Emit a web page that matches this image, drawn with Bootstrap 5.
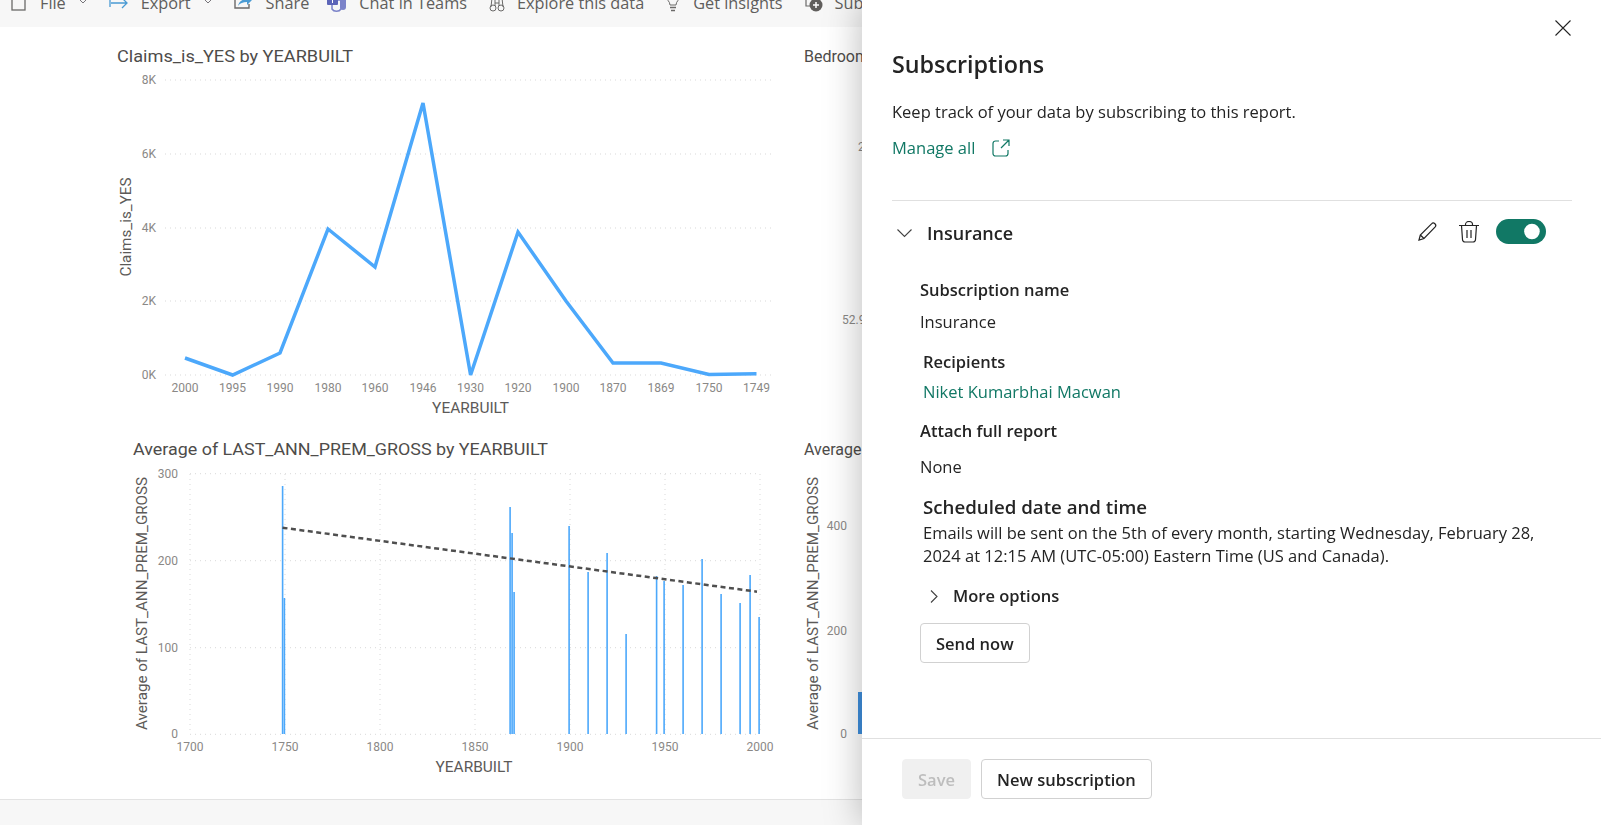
<!DOCTYPE html>
<html lang="en">
  <head>
    <meta charset="UTF-8" />
    <meta name="viewport" content="width=device-width, initial-scale=1.0" />
    <title>Subscriptions</title>
    <link href="https://cdn.jsdelivr.net/npm/bootstrap@5.3.3/dist/css/bootstrap.min.css" rel="stylesheet" />
    <style>
      body {
        height: 825px;
        overflow: hidden;
        background: #fff;
        font-family: "Open Sans", sans-serif;
        font-size: 16.5px;
        color: #242424;
      }

      /* report side */
      .report-toolbar {
        height: 27px;
        flex: 0 0 27px;
        background: #f7f7f7;
        padding-left: 11px;
        gap: 21px;
        color: #605e5c;
        font-size: 16.3px;
        line-height: 20px;
        white-space: nowrap;
      }
      .toolbar-item {
        gap: 12px;
        padding-bottom: 14px;
        align-items: flex-end;
      }
      .toolbar-item svg {
        margin-bottom: -1px;
        flex: none;
      }
      .toolbar-item svg.tb-chev {
        margin-bottom: 7px;
      }
      .toolbar-item svg.tb-wide {
        margin-right: 2px;
      }
      .tb-share {
        margin-right: -3px;
      }
      .tb-chat {
        margin-right: 1px;
      }
      .report-canvas {
        flex: 1 1 auto;
        display: grid;
        grid-template-rows: 393px 379px;
      }
      .report-canvas svg {
        display: block;
      }
      .report-foot {
        height: 26px;
        flex: 0 0 26px;
        background: #f7f7f7;
        border-top: 1px solid #e3e3e3;
      }
      .chart-title {
        font: 400 16px "Roboto", sans-serif;
        fill: #4e4c4a;
      }
      .axis-title {
        font: 400 14px "Roboto", sans-serif;
        fill: #5c5a58;
      }
      .tick-label {
        font: 400 12px "Roboto", sans-serif;
        fill: #8a8886;
      }
      .grid-line {
        stroke: #d9d9d9;
        stroke-width: 1;
        stroke-dasharray: 1 4;
      }

      /* subscriptions pane */
      .subs-pane {
        position: fixed;
        top: 0;
        right: 0;
        bottom: 0;
        width: 739px;
        background: #fff;
        box-shadow: 0 0 36px rgba(0, 0, 0, 0.28);
        display: flex;
        flex-direction: column;
        line-height: 22px;
      }
      .subs-body {
        flex: 1 1 auto;
        padding: 20px 29px 0 30px;
      }
      .close-x {
        height: 15px;
        margin-right: 1px;
      }
      .close-x button,
      .icon-btn {
        background: none;
        border: 0;
        padding: 0;
        line-height: 0;
      }
      .subs-title {
        font-size: 23.3px;
        font-weight: 600;
        line-height: 32px;
        margin: 13px 0 0;
      }
      .subs-lead {
        margin: 21px 0 0;
      }
      .manage-link {
        margin-top: 14px;
        gap: 17px;
      }
      .teal-link {
        color: #117865;
        text-decoration: none;
      }
      .subs-rule {
        margin: 41px 0 0;
        border: 0;
        border-top: 1px solid #e0e0e0;
        opacity: 1;
      }
      .sub-head {
        height: 25px;
        margin-top: 18px;
        padding: 0 26px 0 5px;
      }
      .sub-chev {
        margin-top: 3px;
      }
      .sub-name {
        font-size: 18px;
        font-weight: 600;
        margin: 3px 0 0 15px;
      }
      .edit-btn {
        margin-right: 22px;
      }
      .switch-box {
        margin: 0 0 0 17px;
        padding: 0;
        min-height: 0;
        line-height: 0;
      }
      .switch-box .form-check-input {
        width: 50px;
        height: 25px;
        margin: 0;
        background-color: #117865;
        border: 0;
        background-image: url("data:image/svg+xml,%3csvg xmlns='http://www.w3.org/2000/svg' viewBox='-4 -4 8 8'%3e%3ccircle cx='-.5' r='2.5' fill='%23fff'/%3e%3c/svg%3e");
      }
      .sub-detail {
        padding-left: 28px;
      }
      .field-label {
        font-weight: 600;
      }
      .name-label {
        margin-top: 35px;
      }
      .name-value {
        margin-top: 10px;
      }
      .next-label {
        margin-top: 18px;
      }
      .attach-label {
        margin-top: 17px;
      }
      .recipient-link {
        margin-top: 8px;
      }
      .none-value {
        margin-top: 14px;
      }
      .nudge {
        margin-left: 3px;
      }
      .sched-title {
        font-size: 18.7px;
        font-weight: 600;
        line-height: 24px;
        margin: 17px 0 0 3px;
      }
      .sched-text {
        line-height: 23px;
        margin: 2px 0 0 3px;
        width: 620px;
      }
      .more-row {
        margin: 18px 0 0 10px;
        gap: 15px;
      }
      .pane-btn {
        height: 40px;
        padding: 2px 15px 0;
        font-size: 16.5px;
        font-weight: 600;
        color: #242424;
        background: #fff;
        border: 1px solid #d1d1d1;
        border-radius: 4px;
      }
      .send-btn {
        margin-top: 16px;
      }
      .subs-foot {
        border-top: 1px solid #e0e0e0;
        padding: 20px 0 26px 40px;
        gap: 10px;
      }
      .pane-btn:disabled {
        background: #f0f0f0;
        border-color: #f0f0f0;
        color: #bdbdbd;
        opacity: 1;
      }
    </style>
  </head>
  <body>
    <div class="d-flex flex-column vh-100">
      <div class="report-toolbar d-flex align-items-end overflow-hidden">
        <div class="toolbar-item d-flex">
          <svg class="tb-wide" width="15" height="20" viewBox="0 0 15 20"><rect x="1" y="-4" width="13" height="20" fill="none" stroke="#6b6a69" stroke-width="1.3" /></svg>
          <span>File</span>
          <svg class="tb-chev" width="10" height="8" viewBox="0 0 10 8"><path d="M1 1l4 4 4-4" fill="none" stroke="#77757a" /></svg>
        </div>
        <div class="toolbar-item d-flex">
          <svg width="20" height="20" viewBox="0 0 20 20"><path d="M1 5v8M2 9h16M13 4l5 5-5 5" fill="none" stroke="#4a9bd4" stroke-width="1.3" /></svg>
          <span>Export</span>
          <svg class="tb-chev" width="10" height="8" viewBox="0 0 10 8"><path d="M1 1l4 4 4-4" fill="none" stroke="#77757a" /></svg>
        </div>
        <div class="toolbar-item tb-share d-flex">
          <svg class="tb-wide" width="18" height="20" viewBox="0 0 18 20"><path d="M1 6v8h14v-4" fill="none" stroke="#6b6a69" stroke-width="1.4" /><path d="M4 12c1-5 5-7 9-7V2l5 4-5 5V8c-4 0-7 1-9 4z" fill="#4a9bd4" /></svg>
          <span>Share</span>
        </div>
        <div class="toolbar-item tb-chat d-flex">
          <svg width="20" height="20" viewBox="0 0 20 20"><path d="M13 4h6v9a3 3 0 0 1-6 0z" fill="#7b83c9" /><path d="M5 6h9v9a5 4 0 0 1-9 0z" fill="none" stroke="#7b83c9" stroke-width="1.5" /><rect x="0" y="1" width="11" height="10" rx="1" fill="#5c65b8" /><path d="M3 3h5M5.5 3v6" stroke="#fff" /></svg>
          <span>Chat in Teams</span>
        </div>
        <div class="toolbar-item d-flex">
          <svg width="16" height="20" viewBox="0 0 16 20"><circle cx="4" cy="14" r="3" fill="none" stroke="#6b6a69" /><circle cx="12" cy="14" r="3" fill="none" stroke="#6b6a69" /><path d="M2 13l1-9h3v8M14 13l-1-9h-3v8M6 9h4" fill="none" stroke="#6b6a69" /></svg>
          <span>Explore this data</span>
        </div>
        <div class="toolbar-item d-flex">
          <svg width="16" height="20" viewBox="0 0 16 20"><path d="M1 1c0 5 4 6 4 10h6c0-4 4-5 4-10" fill="none" stroke="#6b6a69" /><path d="M5 13.5h6M6 16.5h4" stroke="#6b6a69" stroke-width="1.3" /></svg>
          <span>Get insights</span>
        </div>
        <div class="toolbar-item d-flex">
          <svg width="19" height="20" viewBox="0 0 19 20"><path d="M2 2v10h4" fill="none" stroke="#6b6a69" stroke-width="1.2" /><circle cx="12" cy="11" r="6.5" fill="#605e5c" /><path d="M12 8v6M9 11h6" stroke="#fff" stroke-width="1.5" /></svg>
          <span>Subscribe to report</span>
        </div>
      </div>

      <div class="report-canvas">
        <svg width="862" height="393" viewBox="0 27 862 393">
          <g>
            <line class="grid-line" x1="165" y1="80" x2="772" y2="80" />
            <line class="grid-line" x1="165" y1="154" x2="772" y2="154" />
            <line class="grid-line" x1="165" y1="228" x2="772" y2="228" />
            <line class="grid-line" x1="165" y1="301" x2="772" y2="301" />
            <line class="grid-line" x1="165" y1="375" x2="772" y2="375" />
          </g>
          <text class="chart-title" x="117" y="62" textLength="236" lengthAdjust="spacingAndGlyphs">Claims_is_YES by YEARBUILT</text>
          <text class="axis-title" transform="translate(131 276.5) rotate(-90)" textLength="99" lengthAdjust="spacingAndGlyphs">Claims_is_YES</text>
          <g text-anchor="end">
            <text class="tick-label" x="156" y="84">8K</text>
            <text class="tick-label" x="156" y="158">6K</text>
            <text class="tick-label" x="156" y="232">4K</text>
            <text class="tick-label" x="156" y="305">2K</text>
            <text class="tick-label" x="156" y="379">0K</text>
          </g>
          <g text-anchor="middle">
            <text class="tick-label" x="185" y="392" textLength="27" lengthAdjust="spacingAndGlyphs">2000</text>
            <text class="tick-label" x="232.6" y="392" textLength="27" lengthAdjust="spacingAndGlyphs">1995</text>
            <text class="tick-label" x="280" y="392" textLength="27" lengthAdjust="spacingAndGlyphs">1990</text>
            <text class="tick-label" x="328" y="392" textLength="27" lengthAdjust="spacingAndGlyphs">1980</text>
            <text class="tick-label" x="375" y="392" textLength="27" lengthAdjust="spacingAndGlyphs">1960</text>
            <text class="tick-label" x="423" y="392" textLength="27" lengthAdjust="spacingAndGlyphs">1946</text>
            <text class="tick-label" x="470.6" y="392" textLength="27" lengthAdjust="spacingAndGlyphs">1930</text>
            <text class="tick-label" x="518" y="392" textLength="27" lengthAdjust="spacingAndGlyphs">1920</text>
            <text class="tick-label" x="566" y="392" textLength="27" lengthAdjust="spacingAndGlyphs">1900</text>
            <text class="tick-label" x="613" y="392" textLength="27" lengthAdjust="spacingAndGlyphs">1870</text>
            <text class="tick-label" x="661" y="392" textLength="27" lengthAdjust="spacingAndGlyphs">1869</text>
            <text class="tick-label" x="709" y="392" textLength="27" lengthAdjust="spacingAndGlyphs">1750</text>
            <text class="tick-label" x="756.5" y="392" textLength="27" lengthAdjust="spacingAndGlyphs">1749</text>
          </g>
          <text class="axis-title" x="470.6" y="413" text-anchor="middle" textLength="77" lengthAdjust="spacingAndGlyphs">YEARBUILT</text>
          <polyline points="185,358 232.6,375 280,353 328,229 375,267 423,103 470.6,375 518,232 566,301 613,363 661,363 709,374.5 756.5,373.7" fill="none" stroke="#4ca8fb" stroke-width="3.5" stroke-linejoin="miter" />
          <text class="chart-title" x="804" y="62">Bedroom</text>
          <text class="tick-label" x="842" y="324">52.9</text>
          <text class="tick-label" x="858" y="151">2</text>
        </svg>

        <svg width="862" height="379" viewBox="0 420 862 379">
          <g>
            <line class="grid-line" x1="190" y1="473.7" x2="760" y2="473.7" />
            <line class="grid-line" x1="190" y1="560.7" x2="760" y2="560.7" />
            <line class="grid-line" x1="190" y1="647.7" x2="760" y2="647.7" />
            <line class="grid-line" x1="190" y1="734.3" x2="760" y2="734.3" />
            <line class="grid-line" x1="190" y1="474" x2="190" y2="734" />
            <line class="grid-line" x1="285" y1="474" x2="285" y2="734" />
            <line class="grid-line" x1="380" y1="474" x2="380" y2="734" />
            <line class="grid-line" x1="475" y1="474" x2="475" y2="734" />
            <line class="grid-line" x1="570" y1="474" x2="570" y2="734" />
            <line class="grid-line" x1="665" y1="474" x2="665" y2="734" />
            <line class="grid-line" x1="760" y1="474" x2="760" y2="734" />
          </g>
          <text class="chart-title" x="133" y="455" textLength="415" lengthAdjust="spacingAndGlyphs">Average of LAST_ANN_PREM_GROSS by YEARBUILT</text>
          <text class="axis-title" transform="translate(147 730) rotate(-90)" textLength="253" lengthAdjust="spacingAndGlyphs">Average of LAST_ANN_PREM_GROSS</text>
          <g text-anchor="end">
            <text class="tick-label" x="178" y="478">300</text>
            <text class="tick-label" x="178" y="565">200</text>
            <text class="tick-label" x="178" y="652">100</text>
            <text class="tick-label" x="178" y="738">0</text>
          </g>
          <g text-anchor="middle">
            <text class="tick-label" x="190" y="751">1700</text>
            <text class="tick-label" x="285" y="751">1750</text>
            <text class="tick-label" x="380" y="751">1800</text>
            <text class="tick-label" x="475" y="751">1850</text>
            <text class="tick-label" x="570" y="751">1900</text>
            <text class="tick-label" x="665" y="751">1950</text>
            <text class="tick-label" x="760" y="751">2000</text>
          </g>
          <text class="axis-title" x="474" y="772" text-anchor="middle" textLength="77" lengthAdjust="spacingAndGlyphs">YEARBUILT</text>
          <g fill="#4ca8fb">
            <rect x="281.8" y="486" width="1.6" height="248" />
            <rect x="283.6" y="598" width="1.6" height="136" />
            <rect x="509.3" y="507" width="1.6" height="227" />
            <rect x="511.3" y="533" width="1.6" height="201" />
            <rect x="513.3" y="592" width="1.6" height="142" />
            <rect x="568.3" y="526" width="1.6" height="208" />
            <rect x="587.3" y="572" width="1.6" height="162" />
            <rect x="606.3" y="553" width="1.6" height="181" />
            <rect x="625.3" y="634" width="1.6" height="100" />
            <rect x="655.8" y="576" width="1.6" height="158" />
            <rect x="663.3" y="581" width="1.6" height="153" />
            <rect x="682.3" y="585" width="1.6" height="149" />
            <rect x="701.3" y="559" width="1.6" height="175" />
            <rect x="720.3" y="594" width="1.6" height="140" />
            <rect x="739.3" y="603" width="1.6" height="131" />
            <rect x="749.3" y="575" width="1.6" height="159" />
            <rect x="758.3" y="617" width="1.6" height="117" />
          </g>
          <line x1="282.5" y1="527.7" x2="757" y2="591.7" stroke="#4f4f4f" stroke-width="2.5" stroke-dasharray="5 3.5" />
          <text class="chart-title" x="804" y="455">Average of</text>
          <text class="axis-title" transform="translate(818 730) rotate(-90)" textLength="253" lengthAdjust="spacingAndGlyphs">Average of LAST_ANN_PREM_GROSS</text>
          <g text-anchor="end">
            <text class="tick-label" x="847" y="530">400</text>
            <text class="tick-label" x="847" y="635">200</text>
            <text class="tick-label" x="847" y="738">0</text>
          </g>
          <rect x="858" y="692" width="5" height="42" fill="#3f8fde" />
        </svg>
      </div>

      <div class="report-foot"></div>
    </div>

    <aside class="subs-pane">
      <div class="subs-body">
        <div class="close-x d-flex justify-content-end">
          <button type="button" aria-label="Close">
            <svg width="16" height="16" viewBox="0 0 16 16"><path d="M.5.5l15 15M15.5.5l-15 15" stroke="#242424" stroke-width="1.1" /></svg>
          </button>
        </div>
        <h2 class="subs-title">Subscriptions</h2>
        <p class="subs-lead">Keep track of your data by subscribing to this report.</p>
        <div class="manage-link d-flex align-items-center">
          <a class="teal-link" href="#">Manage all</a>
          <svg width="18" height="18" viewBox="0 0 18 18"><path d="M7 2H3.500A2.500 2.500 0 0 0 1 4.500v10A2.500 2.500 0 0 0 3.500 17h10a2.500 2.500 0 0 0 2.500-2.500V11M11 1h6v6M17 1l-8 8" fill="none" stroke="#117865" stroke-width="1.2" /></svg>
        </div>
        <hr class="subs-rule" />

        <div class="sub-head d-flex align-items-center">
          <svg class="sub-chev" width="15" height="9" viewBox="0 0 15 9"><path d="M.5.5l7 7 7-7" fill="none" stroke="#424242" stroke-width="1.1" /></svg>
          <div class="sub-name flex-grow-1">Insurance</div>
          <button type="button" class="icon-btn edit-btn" aria-label="Edit">
            <svg width="19" height="19" viewBox="0 0 19 19"><path d="M1 18l1.300-5L13.500 1.800a2.300 2.300 0 0 1 3.500 3.300L6 16.500z M2.300 13L6 16.500" fill="none" stroke="#242424" stroke-width="1.2" /></svg>
          </button>
          <button type="button" class="icon-btn" aria-label="Delete">
            <svg width="20" height="22" viewBox="0 0 20 22"><path d="M0 4.500h20M6.500 4.500V3.500a3.500 3 0 0 1 7 0v1M2.500 4.500l1 14a2.500 2.500 0 0 0 2.500 2.500h8a2.500 2.500 0 0 0 2.500-2.500l1-14M8 9v8M12 9v8" fill="none" stroke="#242424" stroke-width="1.2" /></svg>
          </button>
          <div class="form-check form-switch switch-box">
            <input class="form-check-input" type="checkbox" role="switch" checked aria-label="Active" />
          </div>
        </div>

        <div class="sub-detail">
          <div class="field-label name-label">Subscription name</div>
          <div class="name-value">Insurance</div>
          <div class="field-label nudge next-label">Recipients</div>
          <a class="teal-link d-block nudge recipient-link" href="#">Niket Kumarbhai Macwan</a>
          <div class="field-label attach-label">Attach full report</div>
          <div class="none-value">None</div>
          <div class="sched-title">Scheduled date and time</div>
          <div class="sched-text">Emails will be sent on the 5th of every month, starting Wednesday, February 28, 2024 at 12:15 AM (UTC-05:00) Eastern Time (US and Canada).</div>
          <div class="more-row d-flex align-items-center">
            <svg width="8" height="13" viewBox="0 0 8 13"><path d="M1 .5l6 6-6 6" fill="none" stroke="#424242" stroke-width="1.1" /></svg>
            <span class="field-label">More options</span>
          </div>
          <button type="button" class="btn pane-btn send-btn">Send now</button>
        </div>
      </div>
      <div class="subs-foot d-flex">
        <button type="button" class="btn pane-btn" disabled>Save</button>
        <button type="button" class="btn pane-btn">New subscription</button>
      </div>
    </aside>
    <script src="https://cdn.jsdelivr.net/npm/bootstrap@5.3.3/dist/js/bootstrap.bundle.min.js"></script>
  </body>
</html>
